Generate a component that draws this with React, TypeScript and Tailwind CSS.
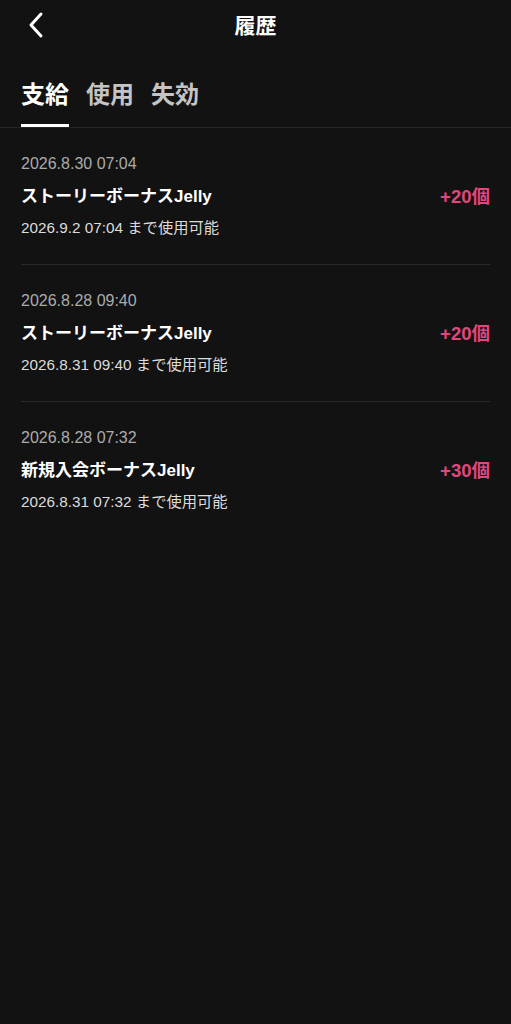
import React from "react";

const items = [
  { date: "2026.8.30 07:04", title: "ストーリーボーナスJelly", amount: "+20個", until: "2026.9.2 07:04 まで使用可能" },
  { date: "2026.8.28 09:40", title: "ストーリーボーナスJelly", amount: "+20個", until: "2026.8.31 09:40 まで使用可能" },
  { date: "2026.8.28 07:32", title: "新規入会ボーナスJelly", amount: "+30個", until: "2026.8.31 07:32 まで使用可能" },
];

export default function App() {
  return (
    <div
      className="min-h-[1024px] w-full bg-[#121212] text-white"
      style={{ fontFamily: '"Liberation Sans", "Noto Sans CJK JP", sans-serif' }}
    >
      <div className="relative flex h-[50px] items-center justify-center">
        <button className="absolute left-[24px] top-[11px] flex h-[28px] w-[24px] items-center justify-center">
          <svg width="20" height="28" viewBox="0 0 20 28" fill="none">
            <path d="M15 3 L5 14 L15 25" stroke="white" strokeWidth="3" strokeLinecap="round" strokeLinejoin="round" />
          </svg>
        </button>
        <h1 className="text-[21px] font-bold leading-none">履歴</h1>
      </div>
      <div className="flex h-[78px] items-end gap-[17px] border-b border-[#262626] px-[21px]">
        <div className="flex flex-col items-center">
          <span className="text-[24px] font-bold leading-none text-white">支給</span>
          <div className="mt-[17px] h-[3px] w-full bg-white" />
        </div>
        <div className="flex flex-col items-center">
          <span className="text-[24px] font-bold leading-none text-[#c4c4c4]">使用</span>
          <div className="mt-[17px] h-[3px] w-full bg-transparent" />
        </div>
        <div className="flex flex-col items-center">
          <span className="text-[24px] font-bold leading-none text-[#c4c4c4]">失効</span>
          <div className="mt-[17px] h-[3px] w-full bg-transparent" />
        </div>
      </div>
      <div className="px-[21px]">
        {items.map((it, i) => (
          <div
            key={i}
            className={`pt-[26px] pb-[26px] ${i < items.length - 1 ? "border-b border-[#2a2a2a]" : ""}`}
          >
            <div className="text-[16px] leading-[20px] text-[#ababab]">{it.date}</div>
            <div className="mt-[11px] flex items-center justify-between">
              <span className="text-[17px] font-bold leading-[24px] text-white">{it.title}</span>
              <span className="text-[18.5px] font-bold leading-[24px] text-[#e0477e]">{it.amount}</span>
            </div>
            <div className="mt-[9px] text-[15.3px] leading-[20px] text-[#dcdcdc]">{it.until}</div>
          </div>
        ))}
      </div>
    </div>
  );
}
